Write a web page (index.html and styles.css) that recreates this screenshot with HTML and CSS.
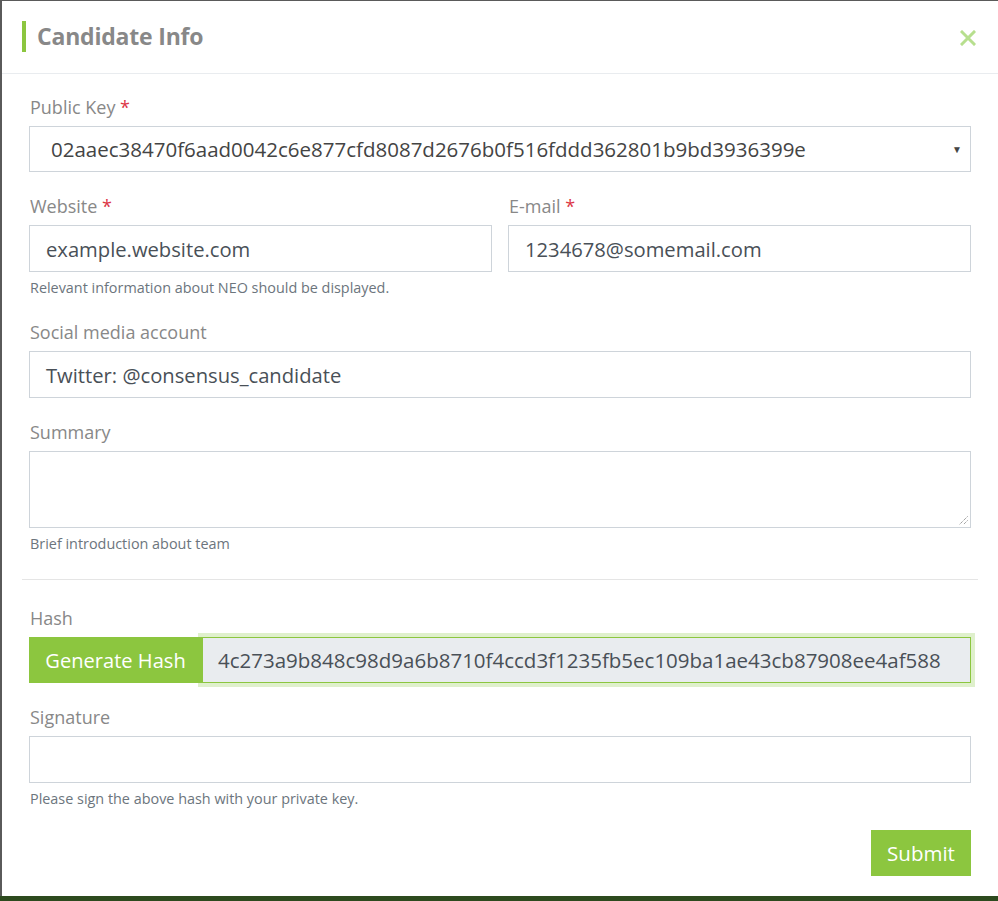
FILE: index.html
```html
<!DOCTYPE html>
<html>
<head>
<meta charset="utf-8">
<link rel="stylesheet" href="styles.css">
</head>
<body>
<div class="modal">
  <div class="modal-header">
    <h2 class="title">Candidate Info</h2>
    <span class="close">
      <svg width="16" height="16" viewBox="0 0 16 16"><path d="M2 2L14 14M14 2L2 14" stroke="#b7df8e" stroke-width="3" stroke-linecap="square"/></svg>
    </span>
  </div>
  <div class="modal-body">
    <div class="group">
      <label class="label">Public Key <span class="req">*</span></label>
      <div class="select">
        <span>02aaec38470f6aad0042c6e877cfd8087d2676b0f516fddd362801b9bd3936399e</span>
        <span class="caret">▼</span>
      </div>
    </div>
    <div class="row">
      <div class="group">
        <label class="label">Website <span class="req">*</span></label>
        <div class="input">example.website.com</div>
        <div class="help">Relevant information about NEO should be displayed.</div>
      </div>
      <div class="group">
        <label class="label">E-mail <span class="req">*</span></label>
        <div class="input">1234678@somemail.com</div>
      </div>
    </div>
    <div class="group">
      <label class="label">Social media account</label>
      <div class="input">Twitter: @consensus_candidate</div>
    </div>
    <div class="group">
      <label class="label">Summary</label>
      <div class="textarea">
        <svg class="grip" width="9" height="9" viewBox="0 0 9 9"><path d="M8.5 0.5L0.5 8.5M8.5 4.5L4.5 8.5" stroke="#777" stroke-width="1" stroke-dasharray="1 1"/></svg>
      </div>
      <div class="help">Brief introduction about team</div>
    </div>
    <hr class="divider">
    <div class="group">
      <label class="label">Hash</label>
      <div class="hash-group">
        <button class="btn gen">Generate Hash</button>
        <div class="hash">4c273a9b848c98d9a6b8710f4ccd3f1235fb5ec109ba1ae43cb87908ee4af588</div>
      </div>
    </div>
    <div class="group">
      <label class="label">Signature</label>
      <div class="input"></div>
      <div class="help">Please sign the above hash with your private key.</div>
    </div>
    <div class="footer">
      <button class="btn submit">Submit</button>
    </div>
  </div>
</div>
</body>
</html>
```

FILE: styles.css
```css
html, body {
  margin: 0;
  padding: 0;
}
body {
  width: 998px;
  height: 901px;
  background: linear-gradient(to bottom, #5a5a5a 0, #5a5a5a 896px, #2d4a1e 896px);
  font-family: "Open Sans", "Noto Sans", sans-serif;
  overflow: hidden;
}
.modal {
  margin: 1px 0 0 2px;
  width: 996px;
  height: 895px;
  background: #fff;
  box-sizing: border-box;
}
.modal-header {
  height: 73px;
  box-sizing: border-box;
  border-bottom: 1px solid #e9ecef;
  display: flex;
  align-items: center;
  justify-content: space-between;
  padding: 0 22px 2px 20px;
}
.title {
  margin: 0;
  border-left: 4px solid #8cc63f;
  padding-left: 11px;
  font-size: 23px;
  line-height: 31px;
  font-weight: 700;
  color: #888;
  letter-spacing: -0.2px;
}
.close {
  display: flex;
  margin-top: 4px;
}
.modal-body {
  padding: 21px 27px 20px 27px;
}
.group {
  margin-bottom: 22px;
}
.row {
  display: grid;
  grid-template-columns: 1fr 1fr;
  column-gap: 16px;
}
.label {
  display: block;
  font-size: 18px;
  line-height: 24px;
  color: #888;
  margin-bottom: 7px;
  padding-left: 1px;
}
.req {
  color: #dc3545;
}
.select, .input, .textarea, .hash {
  box-sizing: border-box;
  border: 1px solid #ced4da;
  color: #495057;
  background: #fff;
}
.select {
  height: 46px;
  display: flex;
  align-items: center;
  justify-content: space-between;
  padding: 0 8px 0 21px;
  color: #444;
  font-size: 20.5px;
}
.caret {
  font-size: 10px;
  color: #444;
}
.input {
  height: 47px;
  display: flex;
  align-items: center;
  padding: 0 16px;
  font-size: 20.2px;
}
.textarea {
  height: 77px;
  position: relative;
}
.grip {
  position: absolute;
  right: 2px;
  bottom: 2px;
}
.help {
  font-size: 14.4px;
  line-height: 21px;
  color: #6c757d;
  margin-top: 5px;
  padding-left: 1px;
}
.divider {
  border: 0;
  border-top: 1px solid #e5e5e5;
  margin: 25px -7px 26px -7px;
}
.hash-group {
  display: flex;
  height: 46px;
}
.btn {
  border: 0;
  background: #8cc63f;
  color: #fff;
  font-family: "Open Sans", "Noto Sans", sans-serif;
  cursor: pointer;
}
.gen {
  width: 173px;
  flex: none;
  position: relative;
  z-index: 1;
  padding: 0;
  font-size: 20.1px;
}
.hash {
  flex: 1;
  background: #e9ecef;
  border-color: #8cc63f;
  box-shadow: 0 0 0 4px #dff0cc;
  display: flex;
  align-items: center;
  padding: 0 15px;
  font-size: 20.5px;
}
.footer {
  display: flex;
  justify-content: flex-end;
  margin-top: -1px;
}
.submit {
  width: 100px;
  height: 46px;
  font-size: 20.5px;
}
```
